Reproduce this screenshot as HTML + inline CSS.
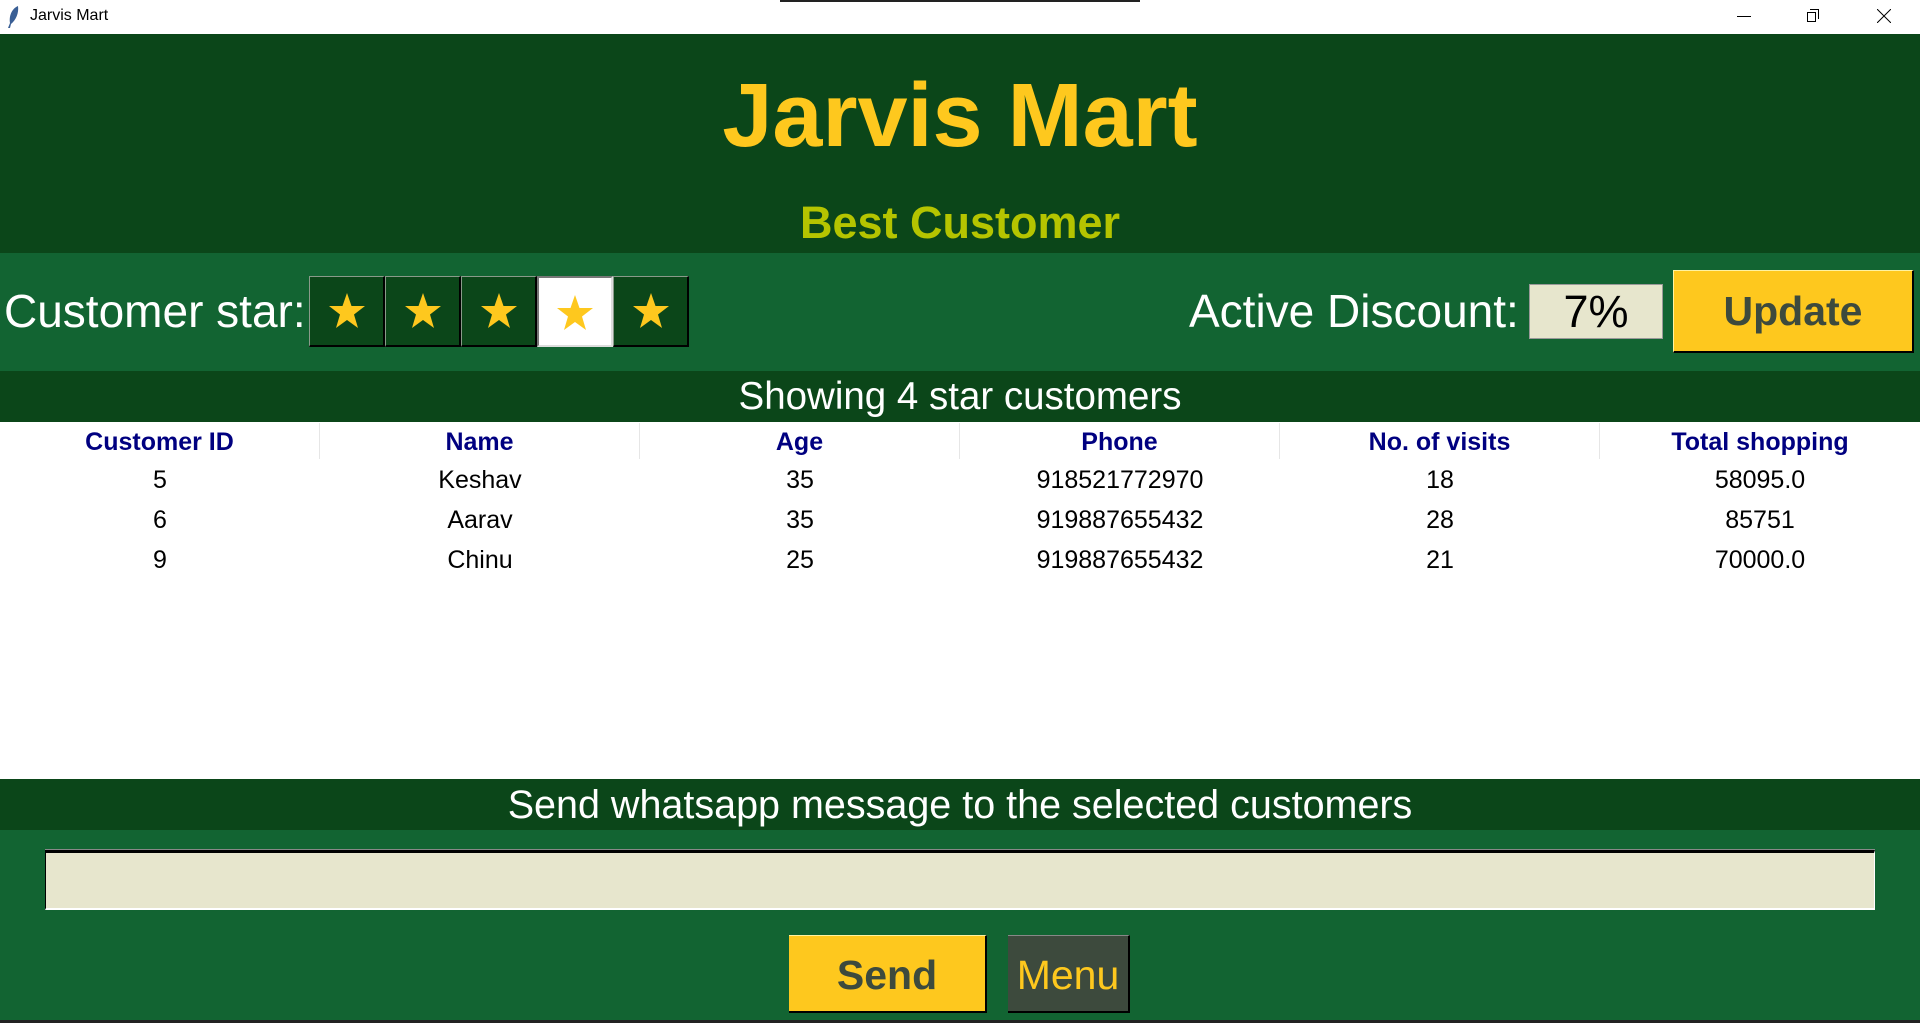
<!DOCTYPE html>
<html><head><meta charset="utf-8"><style>
*{margin:0;padding:0;box-sizing:border-box}
body{width:1920px;height:1023px;overflow:hidden;background:#fff;font-family:"Liberation Sans",sans-serif;position:relative}
.a{position:absolute}
.c{text-align:center}
.star{position:absolute;top:276px;width:76px;height:71px;background:#0b4619;border-top:1px solid #8a9a8a;border-left:1px solid #8a9a8a;border-right:2px solid #000;border-bottom:2px solid #000}
.star svg{position:absolute;left:17px;top:14px}
.th{position:absolute;top:423px;height:36px;width:320px;text-align:center;color:#000080;font-weight:bold;font-size:25px;line-height:38px;border-right:1px solid #e6e6e6}
.td{position:absolute;width:320px;text-align:center;font-size:25px;color:#000;line-height:40px}
</style></head><body>
<div class="a" style="left:0;top:0;width:1920px;height:34px;background:#fff"></div>
<svg class="a" style="left:6px;top:5px" width="14" height="24" viewBox="0 0 14 24"><path d="M12 1 C5 4 3 12 4 18 L2 23 L4 23 L5 19 C10 15 13 8 12 1Z" fill="#3a5f95"/></svg>
<div class="a" style="left:30px;top:7px;font-size:16px;color:#000">Jarvis Mart</div>
<div class="a" style="left:780px;top:0;width:360px;height:2px;background:#222"></div>
<div class="a" style="left:1737px;top:16px;width:14px;height:1px;background:#000"></div>
<div class="a" style="left:1807px;top:12px;width:9px;height:10px;border:1px solid #000"></div>
<div class="a" style="left:1810px;top:9px;width:9px;height:10px;border-top:1px solid #000;border-right:1px solid #000"></div>
<svg class="a" style="left:1877px;top:9px" width="14" height="14"><path d="M0 0L14 14M14 0L0 14" stroke="#000" stroke-width="1"/></svg>

<div class="a" style="left:0;top:34px;width:1920px;height:219px;background:#0b4619"></div>
<div class="a c" style="left:0;top:63px;width:1920px;font-size:90px;font-weight:bold;color:#fec81e;line-height:106px">Jarvis Mart</div>
<div class="a c" style="left:0;top:197px;width:1920px;font-size:45px;font-weight:bold;color:#b5c400;line-height:52px">Best Customer</div>

<div class="a" style="left:0;top:253px;width:1920px;height:118px;background:#126432"></div>
<div class="a" style="left:4px;top:285px;font-size:46px;color:#fff;line-height:52px">Customer star:</div>
<div class="star" style="left:309px"><svg width="40" height="40" viewBox="0 0 40 40"><path d="M20 2 L24.5 15 L38 15 L27 23.5 L31 37 L20 29 L9 37 L13 23.5 L2 15 L15.5 15Z" fill="#fec81e"/></svg></div>
<div class="star" style="left:385px"><svg width="40" height="40" viewBox="0 0 40 40"><path d="M20 2 L24.5 15 L38 15 L27 23.5 L31 37 L20 29 L9 37 L13 23.5 L2 15 L15.5 15Z" fill="#fec81e"/></svg></div>
<div class="star" style="left:461px"><svg width="40" height="40" viewBox="0 0 40 40"><path d="M20 2 L24.5 15 L38 15 L27 23.5 L31 37 L20 29 L9 37 L13 23.5 L2 15 L15.5 15Z" fill="#fec81e"/></svg></div>
<div class="star" style="left:537px;background:#fff;border-top:2px solid #777;border-left:2px solid #777;border-right:2px solid #ddd;border-bottom:2px solid #ddd"><svg width="40" height="40" viewBox="0 0 40 40" style="top:15px;left:16px"><path d="M20 2 L24.5 15 L38 15 L27 23.5 L31 37 L20 29 L9 37 L13 23.5 L2 15 L15.5 15Z" fill="#fec81e"/></svg></div>
<div class="star" style="left:613px"><svg width="40" height="40" viewBox="0 0 40 40"><path d="M20 2 L24.5 15 L38 15 L27 23.5 L31 37 L20 29 L9 37 L13 23.5 L2 15 L15.5 15Z" fill="#fec81e"/></svg></div>

<div class="a" style="left:1189px;top:285px;font-size:46px;color:#fff;line-height:52px">Active Discount:</div>
<div class="a c" style="left:1529px;top:284px;width:134px;height:55px;background:#e7e6cd;border:1px solid #999;font-size:45px;line-height:54px;color:#000">7%</div>
<div class="a c" style="left:1673px;top:270px;width:241px;height:83px;background:#fec81e;border-top:1px solid #fff3a0;border-left:1px solid #fff3a0;border-right:2px solid #000;border-bottom:2px solid #000;font-size:41px;font-weight:bold;color:#3d4a3d;line-height:80px">Update</div>

<div class="a" style="left:0;top:371px;width:1920px;height:51px;background:#0b4619"></div>
<div class="a c" style="left:0;top:375px;width:1920px;font-size:38.5px;color:#fff;line-height:44px">Showing 4 star customers</div>

<div class="th" style="left:0">Customer ID</div>
<div class="th" style="left:320px">Name</div>
<div class="th" style="left:640px">Age</div>
<div class="th" style="left:960px">Phone</div>
<div class="th" style="left:1280px">No. of visits</div>
<div class="th" style="left:1600px;border-right:none">Total shopping</div>

<div class="td" style="left:0;top:460px">5</div><div class="td" style="left:320px;top:460px">Keshav</div><div class="td" style="left:640px;top:460px">35</div><div class="td" style="left:960px;top:460px">918521772970</div><div class="td" style="left:1280px;top:460px">18</div><div class="td" style="left:1600px;top:460px">58095.0</div>
<div class="td" style="left:0;top:500px">6</div><div class="td" style="left:320px;top:500px">Aarav</div><div class="td" style="left:640px;top:500px">35</div><div class="td" style="left:960px;top:500px">919887655432</div><div class="td" style="left:1280px;top:500px">28</div><div class="td" style="left:1600px;top:500px">85751</div>
<div class="td" style="left:0;top:540px">9</div><div class="td" style="left:320px;top:540px">Chinu</div><div class="td" style="left:640px;top:540px">25</div><div class="td" style="left:960px;top:540px">919887655432</div><div class="td" style="left:1280px;top:540px">21</div><div class="td" style="left:1600px;top:540px">70000.0</div>

<div class="a" style="left:0;top:779px;width:1920px;height:51px;background:#0b4619"></div>
<div class="a c" style="left:0;top:783px;width:1920px;font-size:39.5px;color:#fff;line-height:44px">Send whatsapp message to the selected customers</div>
<div class="a" style="left:0;top:830px;width:1920px;height:190px;background:#126432"></div>
<div class="a" style="left:45px;top:850px;width:1830px;height:60px;background:#e7e6cd;border-top:3px solid #000;border-left:1px solid #000;border-bottom:2px solid #fff;border-right:1px solid #fff;box-shadow:0 -1px 0 #888"></div>
<div class="a c" style="left:789px;top:935px;width:198px;height:78px;background:#fec81e;border-top:1px solid #fff3a0;border-right:2px solid #000;border-bottom:2px solid #000;font-size:41px;font-weight:bold;color:#3d4a3d;line-height:78px">Send</div>
<div class="a c" style="left:1008px;top:935px;width:122px;height:78px;background:#3d4a3d;border-top:1px solid #888;border-right:2px solid #000;border-bottom:2px solid #000;font-size:41px;color:#fec81e;line-height:78px">Menu</div>
<div class="a" style="left:0;top:1020px;width:1920px;height:3px;background:#222"></div>
</body></html>
